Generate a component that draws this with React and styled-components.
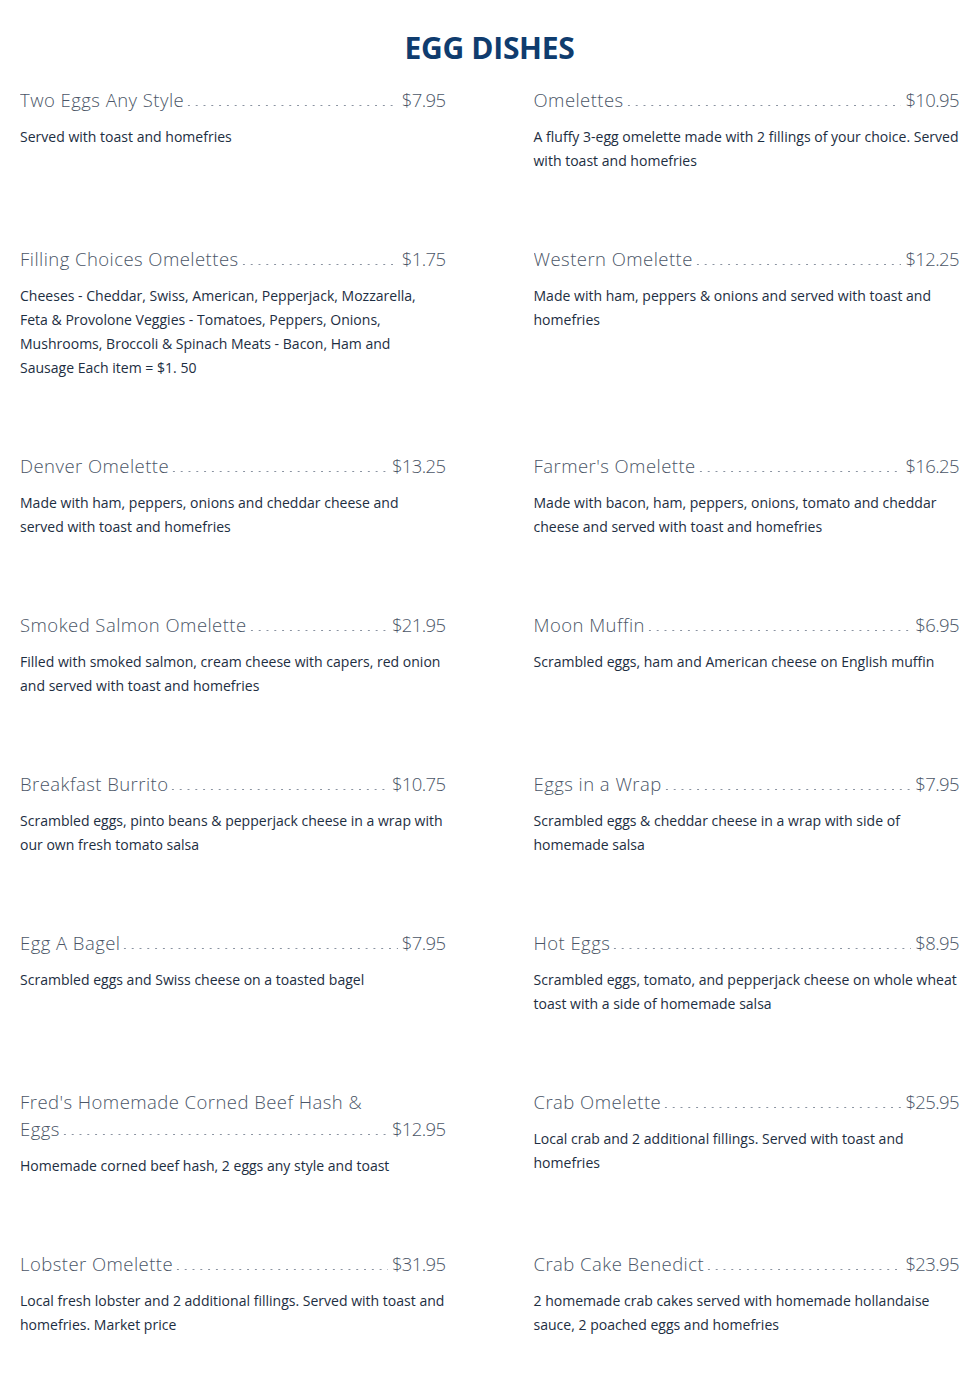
import styled, { createGlobalStyle } from "styled-components";

const items = [
  { name: "Two Eggs Any Style", price: "$7.95", desc: "Served with toast and homefries" },
  { name: "Omelettes", price: "$10.95", desc: "A fluffy 3-egg omelette made with 2 fillings of your choice. Served with toast and homefries" },
  { name: "Filling Choices Omelettes", price: "$1.75", desc: "Cheeses - Cheddar, Swiss, American, Pepperjack, Mozzarella, Feta & Provolone Veggies - Tomatoes, Peppers, Onions, Mushrooms, Broccoli & Spinach Meats - Bacon, Ham and Sausage Each item = $1. 50" },
  { name: "Western Omelette", price: "$12.25", desc: "Made with ham, peppers & onions and served with toast and homefries" },
  { name: "Denver Omelette", price: "$13.25", desc: "Made with ham, peppers, onions and cheddar cheese and served with toast and homefries" },
  { name: "Farmer's Omelette", price: "$16.25", desc: "Made with bacon, ham, peppers, onions, tomato and cheddar cheese and served with toast and homefries" },
  { name: "Smoked Salmon Omelette", price: "$21.95", desc: "Filled with smoked salmon, cream cheese with capers, red onion and served with toast and homefries" },
  { name: "Moon Muffin", price: "$6.95", desc: "Scrambled eggs, ham and American cheese on English muffin" },
  { name: "Breakfast Burrito", price: "$10.75", desc: "Scrambled eggs, pinto beans & pepperjack cheese in a wrap with our own fresh tomato salsa" },
  { name: "Eggs in a Wrap", price: "$7.95", desc: "Scrambled eggs & cheddar cheese in a wrap with side of homemade salsa" },
  { name: "Egg A Bagel", price: "$7.95", desc: "Scrambled eggs and Swiss cheese on a toasted bagel" },
  { name: "Hot Eggs", price: "$8.95", desc: "Scrambled eggs, tomato, and pepperjack cheese on whole wheat toast with a side of homemade salsa" },
  { name: "Fred's Homemade Corned Beef Hash & Eggs", price: "$12.95", desc: "Homemade corned beef hash, 2 eggs any style and toast" },
  { name: "Crab Omelette", price: "$25.95", desc: "Local crab and 2 additional fillings. Served with toast and homefries" },
  { name: "Lobster Omelette", price: "$31.95", desc: "Local fresh lobster and 2 additional fillings. Served with toast and homefries. Market price" },
  { name: "Crab Cake Benedict", price: "$23.95", desc: "2 homemade crab cakes served with homemade hollandaise sauce, 2 poached eggs and homefries" },
];

export default function App() {
  return (
    <Page>
      <Global />
      <Heading>EGG DISHES</Heading>
      <Grid>
        {items.map((item) => (
          <Item key={item.name}>
            <TitleRow>
              <NameBox>
                {item.name}
                <Leader />
              </NameBox>
              <Price>{item.price}</Price>
            </TitleRow>
            <Desc>{item.desc}</Desc>
          </Item>
        ))}
      </Grid>
    </Page>
  );
}

const Global = createGlobalStyle`
  body {
    margin: 0;
    background: #fff;
  }
`;

const Page = styled.div`
  padding: 28px 6px 40px 20px;
`;

const Heading = styled.h1`
  margin: 0 0 18px;
  text-align: center;
  font-family: "Open Sans", sans-serif;
  font-weight: 700;
  font-size: 30px;
  line-height: 40px;
  color: #0f3c6e;
  letter-spacing: -0.3px;
`;

const Grid = styled.div`
  display: grid;
  grid-template-columns: 1fr 1fr;
  column-gap: 88px;
  row-gap: 72.5px;
`;

const Item = styled.div`
  display: flex;
  flex-direction: column;
`;

const TitleRow = styled.div`
  display: flex;
  align-items: flex-end;
  font-family: "Open Sans", sans-serif;
  font-weight: 300;
  font-size: 18.5px;
  line-height: 27px;
  color: #4b5667;
  letter-spacing: 0.45px;
`;

const NameBox = styled.div`
  flex: 1;
  min-width: 0;
  overflow: hidden;
`;

/* dotted leader: paints far to the right, clipped by NameBox */
const Leader = styled.span`
  display: inline-block;
  width: 600px;
  height: 3px;
  margin-left: 1px;
  margin-right: -600px;
  background-image: radial-gradient(circle, #8a93a1 0.7px, transparent 1.1px);
  background-size: 7.8px 3px;
  background-repeat: repeat-x;
  background-position: 0 0;
`;

const Price = styled.div`
  flex: none;
  padding-left: 4px;
  letter-spacing: -0.6px;
`;

const Desc = styled.p`
  margin: 11.5px 0 0;
  font-family: "Open Sans", sans-serif;
  font-size: 14.04px;
  line-height: 24px;
  color: #1d2e42;
`;
